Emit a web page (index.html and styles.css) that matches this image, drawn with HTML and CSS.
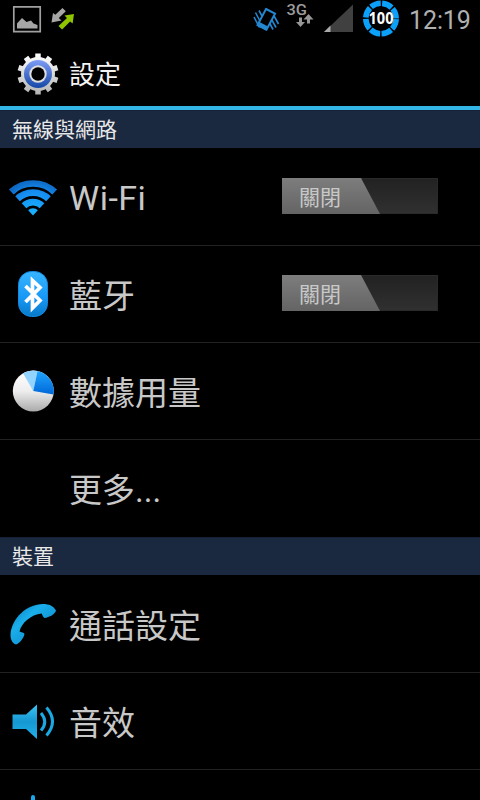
FILE: index.html
```html
<!DOCTYPE html>
<html lang="zh-Hant">
<head>
<meta charset="utf-8">
<title>設定</title>
<link rel="stylesheet" href="styles.css">
</head>
<body>
<div class="screen">
  <div class="status">
    <svg class="notif" width="80" height="38" viewBox="0 0 80 38">
      <path d="M13.800 6.800h26.400v24.800H13.800z" fill="none" stroke="#a0a0a0" stroke-width="1.700"/>
      <path d="M17 28.500v-5l5-5.500 4.500 4 4.500-1.500 2.500 3 4 1.500v3.500z" fill="#a6a6a6"/>
      <path d="M62.500 8l3.300 3.300-7 6.700 2.700 2.500-10 2 1.500-9.500 2.300 1.800z" fill="#a6a6a6"/>
      <path d="M74 14l-1.400 9.500-2.500-2-8 8-3.600-3.500 8.500-8-2.500-2.500z" fill="#8fc400"/>
    </svg>
    <div class="tray">
      <svg width="157" height="38" viewBox="250 0 157 38">
        <g fill="none" stroke="#2487d0" stroke-width="1.600">
          <path d="M254 17l5.500 10.500M255.500 12.500l6 11.500M259 10.500l4 7.500M269 22l4 7.500M270.500 17.500l5.500 10M273 14l5.500 10"/>
          <path d="M266 9l9 4.700-8.500 16-9-4.700z" fill="#000" stroke-width="2"/>
          <path d="M258.500 24l8.500 4.500" stroke-width="4.500"/>
        </g>
        <text class="net" x="286.500" y="14.800" textLength="20.500" lengthAdjust="spacingAndGlyphs">3G</text>
        <path d="M299 17.500h3v4.500h3l-4.500 5-4.500-5h3zM308.500 14l5 5.500h-3.500v4h-3v-4h-3.500z" fill="#969696"/>
        <path d="M353 4.500v27.500h-29z" fill="#404040"/>
        <path d="M324 32l6.500-6.500v6.500z" fill="#aaa"/>
        <circle cx="381" cy="18.500" r="15.200" fill="none" stroke="#0ba0fa" stroke-width="5.600" stroke-dasharray="10.500 1.438" stroke-dashoffset="-.719"/>
        <text class="pct" x="368.500" y="24.200" textLength="25" lengthAdjust="spacingAndGlyphs">100</text>
      </svg>
      <span class="clock">12:19</span>
    </div>
  </div>
  <div class="bar">
    <svg class="gear" width="42" height="42" viewBox="-21 -21 42 42">
      <defs>
        <linearGradient id="gw" gradientUnits="userSpaceOnUse" x1="0" y1="-20" x2="0" y2="20"><stop offset="0" stop-color="#fff"/><stop offset="1" stop-color="#b4b4b4"/></linearGradient>
        <linearGradient id="gb" x1="0" y1="0" x2="0" y2="1"><stop offset="0" stop-color="#7d9cf5"/><stop offset="1" stop-color="#1648a8"/></linearGradient>
      </defs>
      <g fill="none" stroke="url(#gw)" stroke-width="5.500">
        <path d="M-.01-20.500L.01 20.500"/>
        <path d="M-12-16.600L12 16.600M12-16.600L-12 16.600M-19.500-6.300L19.500 6.300M19.500-6.300L-19.500 6.300"/>
      </g>
      <circle r="17" fill="url(#gw)"/>
      <circle r="14" fill="url(#gb)"/>
      <circle r="8.700" fill="#ddd"/>
      <circle r="6.700" fill="#000"/>
    </svg>
    <h1>設定</h1>
  </div>
  <h2>無線與網路</h2>
  <div class="row">
    <svg class="icon" width="50" height="50" viewBox="0 0 50 50">
      <defs>
        <radialGradient id="wf" gradientUnits="userSpaceOnUse" cx="27" cy="42" r="38"><stop offset="0" stop-color="#19b4ff"/><stop offset=".6" stop-color="#168df0"/><stop offset="1" stop-color="#0b5cb2"/></radialGradient>
        <clipPath id="wc"><path d="M25 43.500L1 17.500V0h48v17.500z"/></clipPath>
      </defs>
      <g clip-path="url(#wc)" fill="none" stroke="url(#wf)" stroke-width="6.700">
        <circle cx="25" cy="43.500" r="32"/><circle cx="25" cy="43.500" r="22.800"/><circle cx="25" cy="43.500" r="13.400"/><circle cx="25" cy="43.500" r="3.600" stroke-width="7.200"/>
      </g>
    </svg>
    <span class="label latin">Wi-Fi</span>
    <div class="switch"><span class="thumb">關閉</span></div>
  </div>
  <div class="row">
    <svg class="icon" width="50" height="50" viewBox="0 0 50 50">
      <defs><linearGradient id="bt" x1="0" y1="0" x2="0" y2="1"><stop offset="0" stop-color="#38b5ff"/><stop offset=".6" stop-color="#1697f5"/><stop offset="1" stop-color="#087ac8"/></linearGradient></defs>
      <rect x="10.500" y="2.500" width="29" height="45" rx="13" fill="url(#bt)" stroke="#128be0"/>
      <path d="M17.500 17L32 31.500l-7.500 7.500V11.500L32 18.500 17.500 33" fill="none" stroke="#fff" stroke-width="3.700"/>
    </svg>
    <span class="label">藍牙</span>
    <div class="switch"><span class="thumb">關閉</span></div>
  </div>
  <div class="row">
    <svg class="icon" width="50" height="50" viewBox="0 0 50 50">
      <defs>
        <linearGradient id="pg" x1="0" y1="0" x2="0" y2="1"><stop offset="0" stop-color="#fff"/><stop offset=".5" stop-color="#eee"/><stop offset="1" stop-color="#aaa"/></linearGradient>
        <linearGradient id="pb" x1="0" y1="0" x2="0" y2="1"><stop offset="0" stop-color="#20a5ff"/><stop offset="1" stop-color="#0068d8"/></linearGradient>
      </defs>
      <circle cx="25.300" cy="25" r="20.500" fill="url(#pg)"/>
      <path d="M25.300 25L15 7.200A20.500 20.500 0 0 1 29.500 4.900z" fill="#92d4ff"/>
      <path d="M25.300 25L29.500 4.900A20.500 20.500 0 0 1 45.500 28.500z" fill="url(#pb)"/>
    </svg>
    <span class="label">數據用量</span>
  </div>
  <div class="row">
    <span class="icon"></span>
    <span class="label">更多...</span>
  </div>
  <h2>裝置</h2>
  <div class="row">
    <svg class="icon" width="50" height="50" viewBox="0 0 50 50">
      <defs><linearGradient id="ph" x1="0" y1="0" x2="1" y2="1"><stop offset="0" stop-color="#0879bd"/><stop offset=".35" stop-color="#1aaeea"/><stop offset="1" stop-color="#0679bd"/></linearGradient></defs>
      <path d="M2.500 36C3.500 19 19 5 35 5c6 0 10.500 2 13 6.500-.5 3.500-7 7-11.500 7.500-2-1-2-3.500-3-4.500C23 15.500 13.500 24 11.500 32.500c1.500 1 4.500 1 5 2.500-1 4.500-5 9.500-8.500 10.500-3.500-1-5.500-5-5.500-9.500z" fill="url(#ph)"/>
    </svg>
    <span class="label">通話設定</span>
  </div>
  <div class="row">
    <svg class="icon" width="50" height="50" viewBox="0 0 50 50">
      <defs><linearGradient id="sp" x1="0" y1="0" x2="0" y2="1"><stop offset="0" stop-color="#3cc4f6"/><stop offset=".5" stop-color="#1597d2"/><stop offset="1" stop-color="#22b2ec"/></linearGradient></defs>
      <path d="M4.500 18.500H18L29 8.500v34.500L18 33H4.500z" fill="url(#sp)"/>
      <path d="M33 17q7.500 9 0 17.500M38.500 11.500q12 14 0 28" fill="none" stroke="#1aa9e4" stroke-width="3"/>
    </svg>
    <span class="label">音效</span>
  </div>
  <div class="row">
    <svg class="icon" width="50" height="50" viewBox="0 0 50 50">
      <circle cx="25" cy="25" r="12" fill="#18a8e8"/>
      <path d="M25 4v42M4 25h42M10.500 10.500l29 29M39.500 10.500l-29 29" stroke="#18a8e8" stroke-width="4" stroke-linecap="round"/>
    </svg>
  </div>
</div>
</body>
</html>
```
FILE: styles.css
```css
* { box-sizing: border-box; }
body {
  margin: 0;
  background: #000;
  color: #c8c8c8;
  font-family: Roboto, "Noto Sans CJK TC", sans-serif;
}
.screen { height: 800px; overflow: hidden; }
.status { height: 38px; display: flex; justify-content: space-between; }
.tray { display: flex; }
.net { font: 500 15px Roboto, sans-serif; fill: #9c9c9c; }
.pct { font: bold 16px "Open Sans", sans-serif; fill: #fff; }
.clock { width: 73px; padding-left: 2px; font-size: 25px; line-height: 41px; color: #b0b0b0; letter-spacing: -.1px; font-weight: 400; }
.bar { height: 72px; display: flex; align-items: center; padding-left: 17px; border-bottom: 4px solid #33b5e5; }
.bar .gear { margin-top: 4px; }
h1 { margin: 5px 0 0 10px; font-size: 26px; font-weight: 400; line-height: 40px; color: #f3f3f3; }
h2 {
  height: 38px;
  margin: 0 0 1px;
  padding-left: 12px;
  background: #1a2940;
  border-top: 1px solid #142136;
  color: #e8e8e8;
  font-size: 21px;
  font-weight: 400;
  line-height: 38px;
}
.row { height: 97px; display: flex; align-items: center; padding: 0 42px 0 8px; border-bottom: 1px solid #222; }
.row:has(+ h2) { border-bottom-color: #000; }
.icon { width: 50px; height: 50px; flex: none; }
.label { margin: 5px 0 0 11px; font-size: 33px; line-height: 48px; white-space: nowrap; }
.latin { margin-top: 2px; font-size: 34px; letter-spacing: .5px; }
.switch { width: 156px; height: 36px; margin: -2px 0 0 auto; background: linear-gradient(#222, #303030); border: 1px solid #2a2a2a; }
.thumb {
  display: block;
  width: 98px;
  height: 36px;
  margin: -1px;
  padding-left: 17px;
  clip-path: polygon(0 0, 79px 0, 98px 100%, 0 100%);
  background: linear-gradient(#7d7d7d, #646464);
  color: #c8c8c8;
  font-size: 21px;
  line-height: 41px;
}
```
